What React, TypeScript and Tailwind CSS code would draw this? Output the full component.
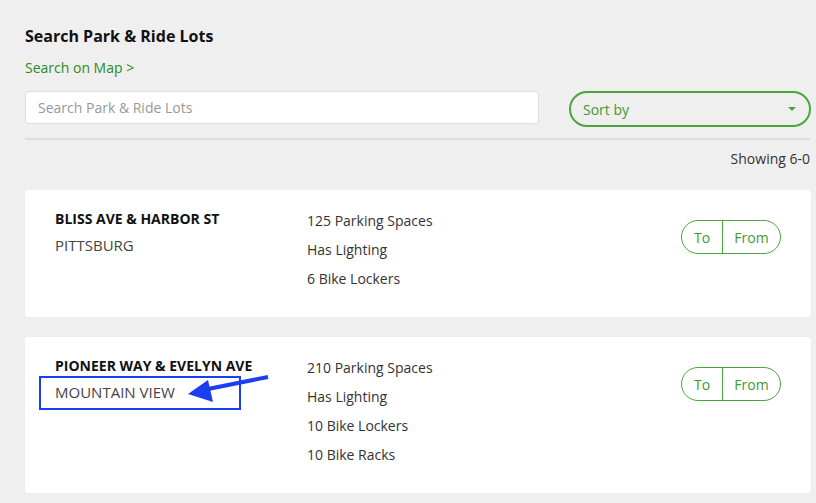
export default function App() {
  const lots = [
    {
      name: "BLISS AVE & HARBOR ST",
      city: "PITTSBURG",
      details: ["125 Parking Spaces", "Has Lighting", "6 Bike Lockers"],
    },
    {
      name: "PIONEER WAY & EVELYN AVE",
      city: "MOUNTAIN VIEW",
      details: ["210 Parking Spaces", "Has Lighting", "10 Bike Lockers", "10 Bike Racks"],
      highlight: true,
    },
  ];

  return (
    <div className="relative min-h-[503px] bg-[#f0eff0] pl-[25px] pr-[5px] pt-[24px] pb-[11px] font-['Open_Sans',sans-serif] text-[#333]">
      <h1 className="text-[16px] font-bold leading-[24px] text-[#111]">Search Park &amp; Ride Lots</h1>
      <a className="mt-[10px] block text-[14px] leading-[20px] text-[#2c8a1d]">Search on Map &gt;</a>

      <div className="mt-[13px] flex items-start">
        <div className="flex h-[33px] w-[514px] items-center rounded-[4px] border border-[#dedede] bg-white px-[12px] text-[14px] text-[#999]">
          Search Park &amp; Ride Lots
        </div>
        <div className="ml-[30px] flex h-[36px] w-[242px] items-center justify-between rounded-full border-2 border-[#4aa63a] px-[12px] text-[14px] text-[#3f9a2e]">
          <span>Sort by</span>
          <svg width="10" height="6" viewBox="0 0 10 6">
            <path d="M1 1h8L5 5z" fill="#4aa63a" />
          </svg>
        </div>
      </div>

      <div className="mt-[11px] mr-[1px] h-[2px] bg-[#dcdcdc]" />
      <div className="mt-[9px] pr-[1px] text-right text-[14px] leading-[20px] text-[#333]">Showing 6-0</div>

      <div className="mt-[21px] flex flex-col gap-[20px]">
        {lots.map((lot) => (
          <div key={lot.name} className="flex rounded-[4px] bg-white pl-[30px] pr-[30px] pt-[18px] pb-[28px]">
            <div className="w-[252px]">
              <div className="text-[14px] font-bold leading-[22px] text-[#111]">{lot.name}</div>
              <div className="relative mt-[5px] text-[15px] leading-[20px] text-[#444]">
                {lot.city}
                {lot.highlight && (
                  <div className="absolute left-[-16px] top-[-6px] h-[34px] w-[202px] border-2 border-[#1a3ff0]" />
                )}
              </div>
            </div>
            <div className="flex flex-1 flex-col gap-[9px] pt-[3px]">
              {lot.details.map((d) => (
                <div key={d} className="text-[14px] leading-[20px] text-[#333]">{d}</div>
              ))}
            </div>
            <div className="mt-[12px] flex h-[34px] self-start overflow-hidden rounded-full border border-[#4aa63a] text-[14px] text-[#3f9a2e]">
              <div className="flex w-[41px] items-center justify-center border-r border-[#4aa63a]">To</div>
              <div className="flex w-[57px] items-center justify-center">From</div>
            </div>
          </div>
        ))}
      </div>

      <svg className="pointer-events-none absolute left-0 top-0" width="816" height="503">
        <line x1="203" y1="390" x2="268" y2="377" stroke="#1a3ff0" strokeWidth="4" />
        <path d="M188 394 L208 380 L213 402 Z" fill="#1a3ff0" />
      </svg>
    </div>
  );
}
